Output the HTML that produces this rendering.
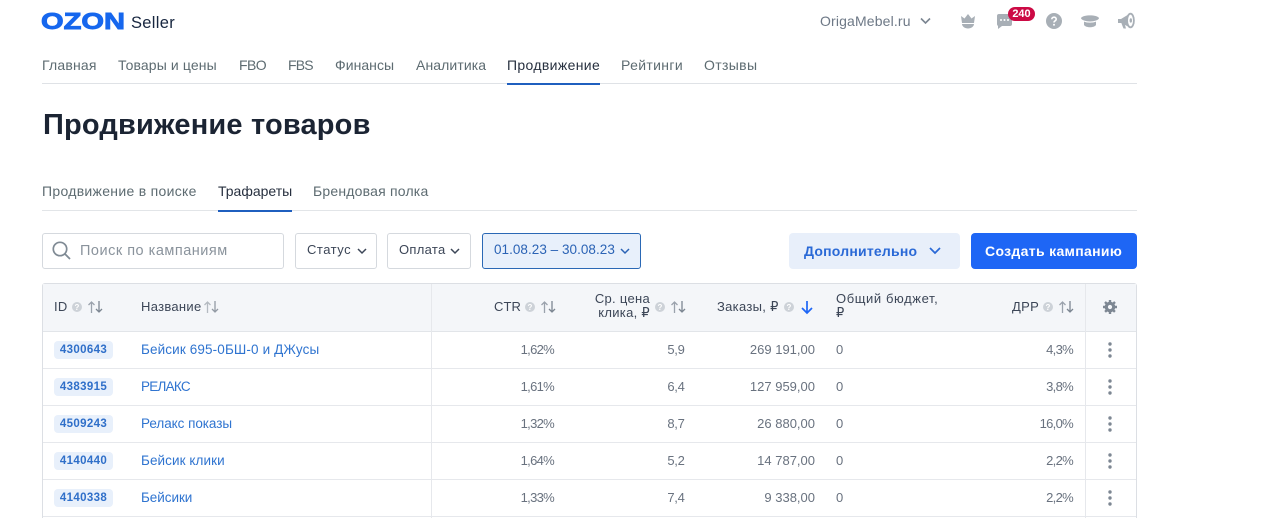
<!DOCTYPE html>
<html lang="ru"><head><meta charset="utf-8"><title>Продвижение товаров</title>
<style>
html,body{margin:0;padding:0;background:#fff;width:1264px;height:518px;overflow:hidden}
body{position:relative;font-family:"Liberation Sans","DejaVu Sans",sans-serif;color:#5f6b7c}
.t{position:absolute;white-space:nowrap;line-height:18px;font-size:14px}
.r{text-align:right}
.b{position:absolute;box-sizing:border-box}
.nav{top:56px;color:#5d6b71}
.th{color:#3c4657;font-size:13px;letter-spacing:.3px;line-height:14px}
.cell{color:#69727f;font-size:13px}
.p{letter-spacing:-.7px;transform:translateX(-1px)}
.n{letter-spacing:-.3px;transform:translateX(-.5px)}
.link{color:#2f74d0;font-size:13.5px}
.tag{position:absolute;left:54px;width:59px;height:18px;background:#e8f0fb;border-radius:4px;color:#2f6fc9;font-size:11.5px;font-weight:bold;text-align:center;line-height:18px;letter-spacing:.35px}
svg{position:absolute;overflow:visible}
.q{font:bold 8px "Liberation Sans",sans-serif;fill:#fff;text-anchor:middle}
</style></head><body>

<svg style="left:0;top:0" width="200" height="40"><text x="41" y="29" font-family="Liberation Sans" font-weight="bold" font-size="23" fill="#1667ee" stroke="#1667ee" stroke-width=".9" textLength="84" lengthAdjust="spacingAndGlyphs">OZON</text></svg>
<div class="t" style="left:131px;top:14px;font-size:16.5px;color:#17263f;letter-spacing:.3px">Seller</div>

<div class="t" style="left:820px;top:12px;color:#6d7886;font-size:14px;letter-spacing:.15px">OrigaMebel.ru</div>
<svg style="left:920px;top:17px" width="11" height="8"><path d="M1 1.500 5.500 6 10 1.500" fill="none" stroke="#7b8591" stroke-width="1.600"/></svg>

<svg style="left:960px;top:14px" width="16" height="15"><path d="M1 2 4.500 4.500 8 0l3.500 4.500L15 2l-1 7H2z" fill="#a8afb6"/><path d="M2 10h12c0 2.500-3 4.500-6 4.500S2 12.500 2 10z" fill="#a8afb6"/></svg>
<svg style="left:996px;top:13px" width="17" height="16"><path d="M3 1h11a2 2 0 0 1 2 2v8a2 2 0 0 1-2 2H6l-4 3v-3a2 2 0 0 1-1-2V3a2 2 0 0 1 2-2z" fill="#a8afb6"/><circle cx="5" cy="7" r="1" fill="#fff"/><circle cx="8.500" cy="7" r="1" fill="#fff"/><circle cx="12" cy="7" r="1" fill="#fff"/></svg>
<div class="b" style="left:1008px;top:7px;width:27px;height:14px;background:#cc0a45;border-radius:7px;color:#fff;font-size:11px;font-weight:bold;text-align:center;line-height:14px">240</div>
<svg style="left:1046px;top:13px" width="16" height="16"><circle cx="8" cy="8" r="8" fill="#a8afb6"/><path d="M5.800 6.300C5.800 5 6.800 4.200 8 4.200s2.200.8 2.200 2c0 1.700-2.200 1.700-2.200 3.300" fill="none" stroke="#fff" stroke-width="1.600"/><circle cx="8" cy="11.800" r="1" fill="#fff"/></svg>
<svg style="left:1081px;top:13px" width="18" height="15"><path d="M0 5C2 1.500 16 1.500 18 5c0 2-5 3.500-9 3.500S0 7 0 5z" fill="#a8afb6"/><path d="M3 8.500C5 10 13 10 15 8.500V12c-2 3-10 3-12 0z" fill="#a8afb6"/></svg>
<svg style="left:1118px;top:12px" width="17" height="18"><path d="M0 7h3l9-5.500v14L3 11H0z" fill="#a8afb6"/><path d="M3.500 11.500h3l1.500 5H5.500z" fill="#a8afb6"/><ellipse cx="12.500" cy="8.500" rx="3.400" ry="6.800" fill="#fff" stroke="#a8afb6" stroke-width="1.800"/><ellipse cx="12.800" cy="8.500" rx="1.200" ry="2.200" fill="#a8afb6"/></svg>

<div class="t nav" style="left:42px;letter-spacing:.2px">Главная</div>
<div class="t nav" style="left:118px;letter-spacing:.12px">Товары и цены</div>
<div class="t nav" style="left:239px;letter-spacing:-.6px">FBO</div>
<div class="t nav" style="left:288px;letter-spacing:-.8px">FBS</div>
<div class="t nav" style="left:335px;letter-spacing:.05px">Финансы</div>
<div class="t nav" style="left:416px;letter-spacing:.1px">Аналитика</div>
<div class="t nav" style="left:507px;color:#27303f;letter-spacing:.35px">Продвижение</div>
<div class="t nav" style="left:621px;letter-spacing:.35px">Рейтинги</div>
<div class="t nav" style="left:704px;letter-spacing:.35px">Отзывы</div>
<div class="b" style="left:42px;top:83px;width:1095px;height:1px;background:#dfe2e6"></div>
<div class="b" style="left:507px;top:83px;width:93px;height:2px;background:#1f5fbf"></div>

<div class="t" style="left:43px;top:108px;font-size:29px;line-height:34px;font-weight:bold;color:#1b2433;letter-spacing:.18px">Продвижение товаров</div>

<div class="t nav" style="left:42px;top:182px;letter-spacing:.3px">Продвижение в поиске</div>
<div class="t nav" style="left:218px;top:182px;color:#27303f;letter-spacing:0">Трафареты</div>
<div class="t nav" style="left:313px;top:182px;letter-spacing:.2px">Брендовая полка</div>
<div class="b" style="left:42px;top:210px;width:1095px;height:1px;background:#e2e5e8"></div>
<div class="b" style="left:218px;top:210px;width:74px;height:2px;background:#1f5fbf"></div>

<div class="b" style="left:42px;top:233px;width:242px;height:36px;border:1px solid #d5d9de;border-radius:3px"></div>
<svg style="left:52px;top:241px" width="20" height="20"><circle cx="8" cy="8" r="6.700" fill="none" stroke="#7f8a94" stroke-width="1.700"/><path d="m13 13 5 5" stroke="#7f8a94" stroke-width="1.800"/></svg>
<div class="t" style="left:80px;top:242px;color:#8a939c;font-size:14.5px;letter-spacing:.5px">Поиск по кампаниям</div>

<div class="b" style="left:295px;top:233px;width:82px;height:36px;border:1px solid #d5d9de;border-radius:3px"></div>
<div class="t" style="left:307px;top:241px;color:#3c4657;font-size:13px;letter-spacing:.5px">Статус</div>
<svg style="left:357px;top:248px" width="10" height="7"><path d="M1 1 5 5 9 1" fill="none" stroke="#3c4657" stroke-width="1.500"/></svg>
<div class="b" style="left:387px;top:233px;width:84px;height:36px;border:1px solid #d5d9de;border-radius:3px"></div>
<div class="t" style="left:399px;top:241px;color:#3c4657;font-size:13px;letter-spacing:.3px">Оплата</div>
<svg style="left:450px;top:248px" width="10" height="7"><path d="M1 1 5 5 9 1" fill="none" stroke="#3c4657" stroke-width="1.500"/></svg>
<div class="b" style="left:482px;top:233px;width:159px;height:36px;border:1px solid #2a68b5;border-radius:3px;background:#e8f0fb"></div>
<div class="t" style="left:494px;top:241px;color:#2b63b5;font-size:13.500px;letter-spacing:.04px">01.08.23 – 30.08.23</div>
<svg style="left:620px;top:248px" width="10" height="7"><path d="M1 1 5 5 9 1" fill="none" stroke="#2b63b5" stroke-width="1.500"/></svg>

<div class="b" style="left:789px;top:233px;width:171px;height:36px;border-radius:4px;background:#e8effa"></div>
<div class="t" style="left:804px;top:242px;color:#2a69d6;font-size:14px;font-weight:bold;letter-spacing:.22px">Дополнительно</div>
<svg style="left:929px;top:247px" width="12" height="8"><path d="M1 1 6 6l5-5" fill="none" stroke="#2a69d6" stroke-width="1.700"/></svg>
<div class="b" style="left:971px;top:233px;width:166px;height:36px;border-radius:4px;background:#1e66f5"></div>
<div class="t" style="left:985px;top:242px;color:#fff;font-size:14px;font-weight:bold;letter-spacing:.33px">Создать кампанию</div>

<!-- table -->
<div class="b" style="left:42px;top:283px;width:1095px;height:235px;border:1px solid #dcdfe4;border-bottom:0;border-radius:3px 3px 0 0"></div>
<div class="b" style="left:43px;top:284px;width:1093px;height:47px;background:#f4f6f9"></div>
<div class="b" style="left:43px;top:331px;width:1093px;height:1px;background:#e2e5e9"></div>
<div class="b" style="left:43px;top:368px;width:1093px;height:1px;background:#e6e8ec"></div>
<div class="b" style="left:43px;top:405px;width:1093px;height:1px;background:#e6e8ec"></div>
<div class="b" style="left:43px;top:442px;width:1093px;height:1px;background:#e6e8ec"></div>
<div class="b" style="left:43px;top:479px;width:1093px;height:1px;background:#e6e8ec"></div>
<div class="b" style="left:43px;top:516px;width:1093px;height:1px;background:#e6e8ec"></div>
<div class="b" style="left:431px;top:284px;width:1px;height:234px;background:#e6e8ec"></div>
<div class="b" style="left:1085px;top:284px;width:1px;height:234px;background:#e6e8ec"></div>

<div class="t th" style="left:54px;top:300px">ID</div>
<svg style="left:72px;top:302px" width="10" height="10"><circle cx="5" cy="5" r="5" fill="#cdd2d8"/><text x="5" y="8" class="q">?</text></svg>
<svg style="left:88px;top:301px" width="15" height="12"><path d="M3.500 12V1M.5 4l3-3 3 3" fill="none" stroke="#9aa2ac" stroke-width="1.300"/><path d="M11 0v11M8 8l3 3 3-3" fill="none" stroke="#7c8692" stroke-width="1.300"/></svg>
<div class="t th" style="left:141px;top:300px">Название</div>
<svg style="left:204px;top:301px" width="15" height="12"><path d="M3.500 12V1M.5 4l3-3 3 3" fill="none" stroke="#b4bac1" stroke-width="1.300"/><path d="M11 0v11M8 8l3 3 3-3" fill="none" stroke="#939ba5" stroke-width="1.300"/></svg>

<div class="t th" style="left:494px;top:300px;letter-spacing:.1px">CTR</div>
<svg style="left:525px;top:302px" width="10" height="10"><circle cx="5" cy="5" r="5" fill="#cdd2d8"/><text x="5" y="8" class="q">?</text></svg>
<svg style="left:541px;top:301px" width="15" height="12"><path d="M3.500 12V1M.5 4l3-3 3 3" fill="none" stroke="#9aa2ac" stroke-width="1.300"/><path d="M11 0v11M8 8l3 3 3-3" fill="none" stroke="#7c8692" stroke-width="1.300"/></svg>

<div class="t th r" style="left:560px;top:292px;width:90px">Ср. цена<br>клика, ₽</div>
<svg style="left:655px;top:302px" width="10" height="10"><circle cx="5" cy="5" r="5" fill="#cdd2d8"/><text x="5" y="8" class="q">?</text></svg>
<svg style="left:671px;top:301px" width="15" height="12"><path d="M3.500 12V1M.5 4l3-3 3 3" fill="none" stroke="#9aa2ac" stroke-width="1.300"/><path d="M11 0v11M8 8l3 3 3-3" fill="none" stroke="#7c8692" stroke-width="1.300"/></svg>

<div class="t th" style="left:717px;top:300px">Заказы, ₽</div>
<svg style="left:784px;top:302px" width="10" height="10"><circle cx="5" cy="5" r="5" fill="#cdd2d8"/><text x="5" y="8" class="q">?</text></svg>
<svg style="left:801px;top:301px" width="12" height="13"><path d="M6 0v12M1 7l5 5 5-5" fill="none" stroke="#1e66f5" stroke-width="1.700"/></svg>

<div class="t th" style="left:836px;top:292px;letter-spacing:.6px">Общий бюджет,<br>₽</div>

<div class="t th" style="left:1012px;top:300px">ДРР</div>
<svg style="left:1043px;top:302px" width="10" height="10"><circle cx="5" cy="5" r="5" fill="#cdd2d8"/><text x="5" y="8" class="q">?</text></svg>
<svg style="left:1059px;top:301px" width="15" height="12"><path d="M3.500 12V1M.5 4l3-3 3 3" fill="none" stroke="#9aa2ac" stroke-width="1.300"/><path d="M11 0v11M8 8l3 3 3-3" fill="none" stroke="#7c8692" stroke-width="1.300"/></svg>
<svg style="left:1103px;top:300px" width="14" height="14" viewBox="0 0 14 14"><circle cx="7" cy="7" r="3.700" fill="none" stroke="#7d8793" stroke-width="3.200"/><path d="M7 0v14M0 7h14M2 2l10 10M12 2 2 12" stroke="#7d8793" stroke-width="2.400" stroke-dasharray="2.400 9.200 2.400 100"/></svg>

<!-- row 1 -->
<div class="tag" style="top:341px">4300643</div>
<div class="t link" style="left:141px;top:341px;letter-spacing:.13px">Бейсик 695-0БШ-0 и ДЖусы</div>
<div class="t cell r p" style="left:455px;top:341px;width:100px">1,62%</div>
<div class="t cell r n" style="left:585px;top:341px;width:100px">5,9</div>
<div class="t cell r" style="left:695px;top:341px;width:120px">269 191,00</div>
<div class="t cell" style="left:836px;top:341px">0</div>
<div class="t cell r p" style="left:974px;top:341px;width:100px">4,3%</div>
<!-- row 2 -->
<div class="tag" style="top:378px">4383915</div>
<div class="t link" style="left:141px;top:378px;letter-spacing:-.75px">РЕЛАКС</div>
<div class="t cell r p" style="left:455px;top:378px;width:100px">1,61%</div>
<div class="t cell r n" style="left:585px;top:378px;width:100px">6,4</div>
<div class="t cell r" style="left:695px;top:378px;width:120px">127 959,00</div>
<div class="t cell" style="left:836px;top:378px">0</div>
<div class="t cell r p" style="left:974px;top:378px;width:100px">3,8%</div>
<!-- row 3 -->
<div class="tag" style="top:415px">4509243</div>
<div class="t link" style="left:141px;top:415px;letter-spacing:-.05px">Релакс показы</div>
<div class="t cell r p" style="left:455px;top:415px;width:100px">1,32%</div>
<div class="t cell r n" style="left:585px;top:415px;width:100px">8,7</div>
<div class="t cell r" style="left:695px;top:415px;width:120px">26 880,00</div>
<div class="t cell" style="left:836px;top:415px">0</div>
<div class="t cell r p" style="left:974px;top:415px;width:100px">16,0%</div>
<!-- row 4 -->
<div class="tag" style="top:452px">4140440</div>
<div class="t link" style="left:141px;top:452px;letter-spacing:.08px">Бейсик клики</div>
<div class="t cell r p" style="left:455px;top:452px;width:100px">1,64%</div>
<div class="t cell r n" style="left:585px;top:452px;width:100px">5,2</div>
<div class="t cell r" style="left:695px;top:452px;width:120px">14 787,00</div>
<div class="t cell" style="left:836px;top:452px">0</div>
<div class="t cell r p" style="left:974px;top:452px;width:100px">2,2%</div>
<!-- row 5 -->
<div class="tag" style="top:489px">4140338</div>
<div class="t link" style="left:141px;top:489px;letter-spacing:-.05px">Бейсики</div>
<div class="t cell r p" style="left:455px;top:489px;width:100px">1,33%</div>
<div class="t cell r n" style="left:585px;top:489px;width:100px">7,4</div>
<div class="t cell r" style="left:695px;top:489px;width:120px">9 338,00</div>
<div class="t cell" style="left:836px;top:489px">0</div>
<div class="t cell r p" style="left:974px;top:489px;width:100px">2,2%</div>

<svg style="left:1107px;top:342px" width="6" height="16"><circle cx="3" cy="2" r="1.700" fill="#7d8793"/><circle cx="3" cy="8" r="1.700" fill="#7d8793"/><circle cx="3" cy="14" r="1.700" fill="#7d8793"/></svg>
<svg style="left:1107px;top:379px" width="6" height="16"><circle cx="3" cy="2" r="1.700" fill="#7d8793"/><circle cx="3" cy="8" r="1.700" fill="#7d8793"/><circle cx="3" cy="14" r="1.700" fill="#7d8793"/></svg>
<svg style="left:1107px;top:416px" width="6" height="16"><circle cx="3" cy="2" r="1.700" fill="#7d8793"/><circle cx="3" cy="8" r="1.700" fill="#7d8793"/><circle cx="3" cy="14" r="1.700" fill="#7d8793"/></svg>
<svg style="left:1107px;top:453px" width="6" height="16"><circle cx="3" cy="2" r="1.700" fill="#7d8793"/><circle cx="3" cy="8" r="1.700" fill="#7d8793"/><circle cx="3" cy="14" r="1.700" fill="#7d8793"/></svg>
<svg style="left:1107px;top:490px" width="6" height="16"><circle cx="3" cy="2" r="1.700" fill="#7d8793"/><circle cx="3" cy="8" r="1.700" fill="#7d8793"/><circle cx="3" cy="14" r="1.700" fill="#7d8793"/></svg>
</body></html>
